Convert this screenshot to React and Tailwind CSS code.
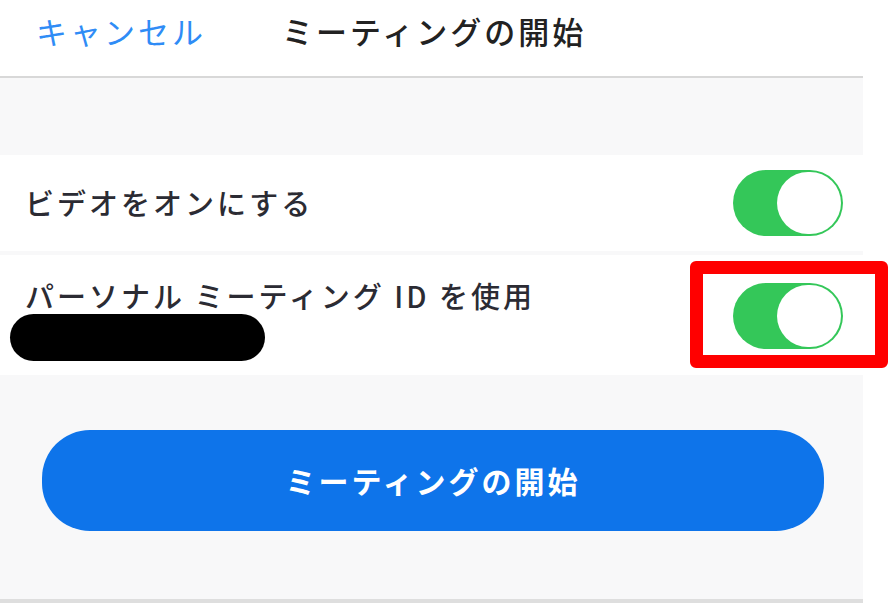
const Toggle = () => (
  <div className="flex h-[66px] w-[110px] items-center justify-end rounded-full bg-[#34c759] p-[2px]">
    <div className="h-[62px] w-[64px] rounded-full bg-white" />
  </div>
);

export default function App() {
  return (
    <div
      className="relative h-[603px] w-[890px] overflow-hidden bg-white"
      style={{ fontFamily: '"Noto Sans CJK JP", "Noto Sans", sans-serif' }}
    >
      <div className="flex h-full w-[863px] flex-col bg-[#f8f8f9]">
        {/* nav bar */}
        <div className="flex h-[76px] items-center bg-white pb-[14px]">
          <button className="ml-[36px] text-[31px] tracking-[3px] text-[#2f8cf6]">キャンセル</button>
          <h1 className="ml-[76px] text-[31px] font-medium tracking-[3px] text-[#222]">ミーティングの開始</h1>
        </div>
        <div className="h-[2px] bg-[#d8d8d8]" />

        <div className="h-[77px]" />

        {/* settings rows */}
        <div className="flex h-[96px] items-center justify-between bg-white pr-[20px] pl-[25px]">
          <span className="text-[29px] font-medium tracking-[3px] text-[#2b2b33]">ビデオをオンにする</span>
          <Toggle />
        </div>
        <div className="h-[4px]" />
        <div className="flex h-[120px] items-start justify-between bg-white pr-[20px] pl-[25px]">
          <div className="flex flex-col">
            <span className="mt-[20px] text-[29px] font-medium leading-[40px] tracking-[3px] text-[#2b2b33]">
              パーソナル ミーティング ID を使用
            </span>
            <div className="mt-[-1px] ml-[-15px] h-[47px] w-[255px] rounded-full bg-black" />
          </div>
          <div className="mt-[28px]">
            <Toggle />
          </div>
        </div>

        {/* start button */}
        <div className="flex flex-1 flex-col px-[42px] pt-[55px]">
          <button className="flex h-[101px] w-[782px] items-center justify-center rounded-[48px] bg-[#0e74ea] text-[30px] font-bold tracking-[3px] text-white">
            ミーティングの開始
          </button>
        </div>
        <div className="h-[4px] bg-[#dedede]" />
      </div>

      {/* highlight box */}
      <div className="absolute top-[261px] left-[690px] h-[107px] w-[198px] rounded-[6px] border-[13px] border-[#ff0000]" />
    </div>
  );
}
